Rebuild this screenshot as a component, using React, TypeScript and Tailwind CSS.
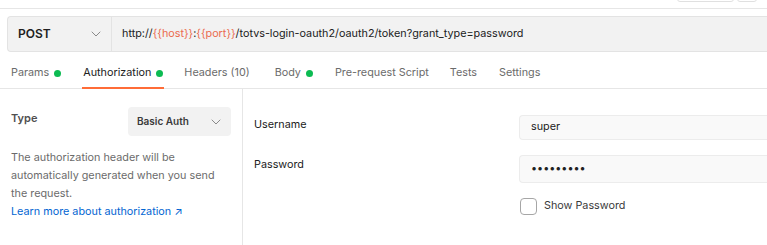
import React from "react";

const Dot = () => <span className="ml-[5px] inline-block h-[7px] w-[7px] rounded-full bg-[#0cbb52]" />;

function Chevron({ className = "" }: { className?: string }) {
  return (
    <svg width="10" height="6" viewBox="0 0 10 6" className={className} fill="none">
      <path d="M1 1l4 4 4-4" stroke="#8a8a8a" strokeWidth="1" strokeLinecap="round" strokeLinejoin="round" />
    </svg>
  );
}

export default function App() {
  return (
    <div className="relative h-[245px] w-[767px] overflow-hidden bg-white font-['Inter',sans-serif] text-[10.8px] text-[#212121]">
      {/* top strip */}
      <div className="relative h-[9px] border-b border-[#e6e6e6]">
        <div className="absolute left-[677px] top-[-4px] h-[6px] w-[57px] rounded-[3px] border border-[#e0e0e0]" />
        <div className="absolute left-[737px] top-[-4px] h-[6px] w-[20px] rounded-[3px] border border-[#e0e0e0]" />
      </div>
      {/* URL bar */}
      <div className="ml-[7px] mt-[7px] flex h-[36px] rounded-l-[4px] border border-r-0 border-[#e3e3e3] bg-[#f2f2f2]">
        <div className="flex w-[104px] items-center justify-between border-r border-[#e3e3e3] pl-[10px] pr-[10px]">
          <span className="text-[12px] font-semibold text-[#212121]">POST</span>
          <Chevron />
        </div>
        <div className="flex items-center pl-[10px] text-[10.8px] text-[#212121]">
          http://<span className="text-[#eb6b4f]">{"{{host}}"}</span>:<span className="text-[#eb6b4f]">{"{{port}}"}</span>/totvs-login-oauth2/oauth2/token?grant_type=password
        </div>
      </div>
      {/* Tabs */}
      <div className="flex h-[37px] border-b border-[#e6e6e6] pl-[11px] pt-[6px] text-[10.8px] text-[#6b6b6b]">
        <div className="flex items-center">Params<Dot /></div>
        <div className="relative ml-[22px] flex items-center text-[#212121]">
          Authorization<Dot />
          <div className="absolute bottom-[-1px] left-[-1px] right-[-1px] h-[2px] bg-[#ff6c37]" />
        </div>
        <div className="ml-[21px] flex items-center">Headers (10)</div>
        <div className="ml-[25px] flex items-center">Body<Dot /></div>
        <div className="ml-[22px] flex items-center">Pre-request Script</div>
        <div className="ml-[21px] flex items-center">Tests</div>
        <div className="ml-[22px] flex items-center">Settings</div>
      </div>
      {/* Body */}
      <div className="flex h-[157px]">
        <div className="w-[243px] shrink-0 border-r border-[#e6e6e6] pl-[11px] pr-[11px] pt-[18px]">
          <div className="flex items-start justify-between">
            <span className="pt-[3px] text-[11px] font-semibold text-[#505050]">Type</span>
            <div className="flex h-[29px] w-[103px] items-center justify-between rounded-[4px] bg-[#f2f2f2] pl-[9px] pr-[10px]">
              <span className="text-[10px] font-semibold text-[#3a3a3a]">Basic Auth</span>
              <Chevron />
            </div>
          </div>
          <p className="mt-[13px] text-[10.8px] leading-[18px] text-[#6b6b6b]">
            The authorization header will be automatically generated when you send the request.
          </p>
          <a className="block text-[10.8px] leading-[18px] text-[#0265d2]">Learn more about authorization ↗</a>
        </div>
        <div className="flex-1 pl-[11px] pt-[26px]">
          <div className="flex h-[25px] items-center">
            <span className="w-[265px] shrink-0 pb-[4px] text-[10.8px] text-[#212121]">Username</span>
            <div className="flex h-[25px] flex-1 items-center rounded-l-[4px] border border-r-0 border-[#ececec] bg-[#f9f9f9] pl-[11px] text-[10.8px] text-[#212121]">super</div>
          </div>
          <div className="mt-[15px] flex h-[28px] items-center">
            <span className="w-[265px] shrink-0 pb-[8px] text-[10.8px] text-[#212121]">Password</span>
            <div className="flex h-[28px] flex-1 items-center rounded-l-[4px] border border-r-0 border-[#ececec] bg-[#f9f9f9] pl-[11px] text-[10.8px] text-[#212121]">•••••••••</div>
          </div>
          <div className="ml-[266px] mt-[15px] flex items-center">
            <div className="h-[17px] w-[17px] rounded-[4px] border border-[#a6a6a6] bg-white" />
            <span className="ml-[7px] text-[10.8px] text-[#3a3a3a]">Show Password</span>
          </div>
        </div>
      </div>
    </div>
  );
}
